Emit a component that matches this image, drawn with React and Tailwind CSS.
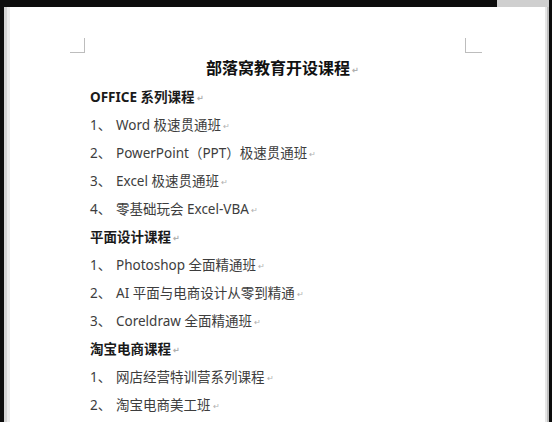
import React from 'react'

const font = { fontFamily: '"Noto Sans", "Noto Sans CJK SC", sans-serif' }

const sections = [
  {
    title: 'OFFICE 系列课程',
    items: ['Word 极速贯通班', 'PowerPoint（PPT）极速贯通班', 'Excel 极速贯通班', '零基础玩会 Excel-VBA'],
  },
  {
    title: '平面设计课程',
    items: ['Photoshop 全面精通班', 'AI 平面与电商设计从零到精通', 'Coreldraw 全面精通班'],
  },
  {
    title: '淘宝电商课程',
    items: ['网店经营特训营系列课程', '淘宝电商美工班'],
  },
]

// Word 的段落标记
const Mark = () => <span className="ml-[2px] text-[8px] text-[#b0b0b0] align-middle">↵</span>

export default function App() {
  return (
    <div className="w-[552px] h-[422px] bg-[#0d0d0d] flex flex-col overflow-hidden" style={font}>
      {/* 顶部黑条 */}
      <div className="h-[7px] flex shrink-0">
        <div className="flex-1" />
        <div className="w-[52px] bg-[#cfcfcf] mr-[3px]" />
      </div>

      <div className="flex flex-1">
        <div className="w-[4px]" />
        <div className="w-[3px] bg-[#d4d4d4]" />
        <div className="w-[3px] bg-[#ececec]" />

        {/* 页面 */}
        <div className="relative flex-1 bg-white">
          {/* 裁剪标记 */}
          <div className="absolute left-[60px] top-[31px] w-[15px] h-[15px] border-r border-b border-[#bdbdbd]" />
          <div className="absolute left-[455px] top-[31px] w-[17px] h-[15px] border-l border-b border-[#bdbdbd]" />

          <div className="pt-[46px] pl-[80px] text-[#3d3d3d]">
            <div className="h-[30px] leading-[30px] text-center text-[16px] font-bold text-[#111] -ml-[70px]">
              部落窝教育开设课程<Mark />
            </div>

            {sections.map((s) => (
              <div key={s.title}>
                <div className="h-[28px] leading-[28px] text-[13.5px] font-bold text-[#1a1a1a]">
                  {s.title}
                  <Mark />
                </div>
                {s.items.map((it, idx) => (
                  <div key={idx} className="h-[28px] leading-[28px] text-[13.5px] flex">
                    <span className="w-[26px] shrink-0">{idx + 1}、</span>
                    <span>
                      {it}
                      <Mark />
                    </span>
                  </div>
                ))}
              </div>
            ))}
          </div>
        </div>

        <div className="w-[2px] bg-[#e6e6e6]" />
        <div className="w-[2px] bg-[#bfbfbf]" />
        <div className="w-[3px]" />
      </div>
    </div>
  )
}
